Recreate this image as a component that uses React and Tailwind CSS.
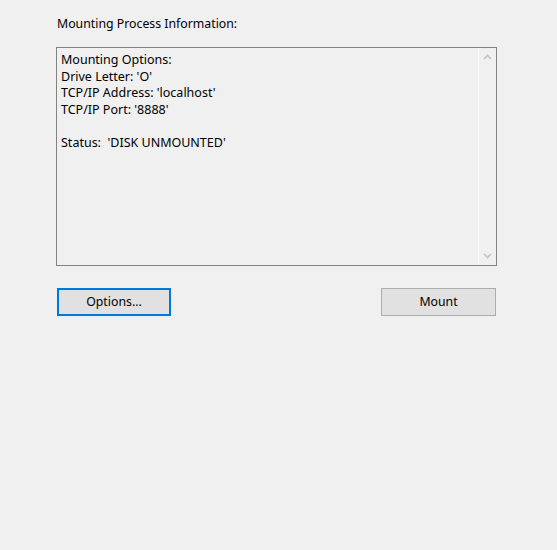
import React from "react";

const lines = [
    "Mounting Options:",
    "Drive Letter: 'O'",
    "TCP/IP Address: 'localhost'",
    "TCP/IP Port: '8888'",
    "",
    "Status:  'DISK UNMOUNTED'",
];

const App = () => {
    return (
        <div
            className="w-[557px] h-[550px] bg-[#f0f0f0] text-black text-[12px]"
            style={{ fontFamily: '"Noto Sans", "Open Sans", sans-serif' }}
        >
            <div className="pl-[57px] pt-[15px] h-[47px] leading-[17px] text-[12.3px]">Mounting Process Information:</div>

            <div className="ml-[56px] w-[441px] h-[219px] border border-[#828282] flex">
                <div className="flex-1 pl-[4px] pt-[4px] leading-[16.7px] text-[12.5px]">
                    {lines.map((line, i) => (
                        <div key={i} className="h-[16.7px] whitespace-pre">
                            {line}
                        </div>
                    ))}
                </div>
                <div className="w-[18px] border-l border-[#fafafa] flex flex-col items-center justify-between py-[6px]">
                    <svg width="9" height="6" viewBox="0 0 9 6">
                        <path d="M1 5 L4.5 1.5 L8 5" fill="none" stroke="#c2c2c2" strokeWidth="1.6" />
                    </svg>
                    <svg width="9" height="6" viewBox="0 0 9 6">
                        <path d="M1 1 L4.5 4.5 L8 1" fill="none" stroke="#c2c2c2" strokeWidth="1.6" />
                    </svg>
                </div>
            </div>

            <div className="ml-[57px] mt-[22px] w-[439px] flex justify-between">
                <button className="w-[114px] h-[28px] bg-[#e1e1e1] border-2 border-[#0078d7] leading-none text-[12.3px]">
                    Options...
                </button>
                <button className="w-[115px] h-[28px] bg-[#e1e1e1] border border-[#adadad] leading-none text-[12.3px]">
                    Mount
                </button>
            </div>
        </div>
    );
};

export default App;
